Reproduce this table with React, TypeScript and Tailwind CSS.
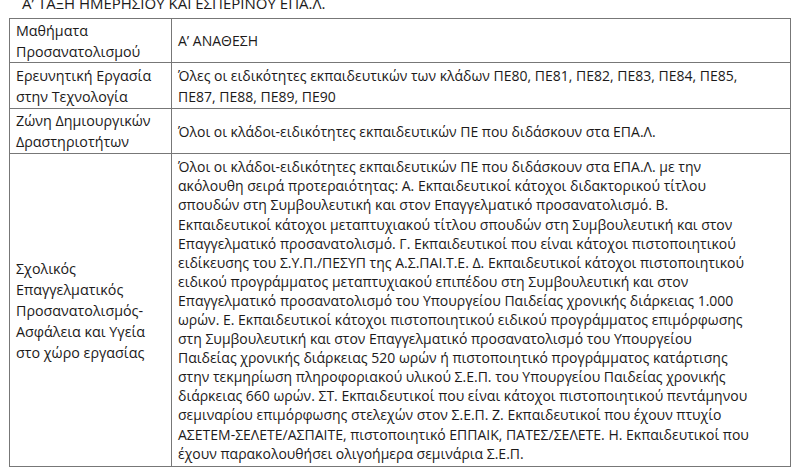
const rows: { label: string[]; text: string[] }[] = [
  {
    label: ["Μαθήματα", "Προσανατολισμού"],
    text: ["Α’ ΑΝΑΘΕΣΗ"],
  },
  {
    label: ["Ερευνητική Εργασία", "στην Τεχνολογία"],
    text: [
      "Όλες οι ειδικότητες εκπαιδευτικών των κλάδων ΠΕ80, ΠΕ81, ΠΕ82, ΠΕ83, ΠΕ84, ΠΕ85,",
      "ΠΕ87, ΠΕ88, ΠΕ89, ΠΕ90",
    ],
  },
  {
    label: ["Ζώνη Δημιουργικών", "Δραστηριοτήτων"],
    text: ["Όλοι οι κλάδοι-ειδικότητες εκπαιδευτικών ΠΕ που διδάσκουν στα ΕΠΑ.Λ."],
  },
  {
    label: [
      "Σχολικός",
      "Επαγγελματικός",
      "Προσανατολισμός-",
      "Ασφάλεια και Υγεία",
      "στο χώρο εργασίας",
    ],
    text: [
      "Όλοι οι κλάδοι-ειδικότητες εκπαιδευτικών ΠΕ που διδάσκουν στα ΕΠΑ.Λ. με την",
      "ακόλουθη σειρά προτεραιότητας: Α. Εκπαιδευτικοί κάτοχοι διδακτορικού τίτλου",
      "σπουδών στη Συμβουλευτική και στον Επαγγελματικό προσανατολισμό. Β.",
      "Εκπαιδευτικοί κάτοχοι μεταπτυχιακού τίτλου σπουδών στη Συμβουλευτική και στον",
      "Επαγγελματικό προσανατολισμό. Γ. Εκπαιδευτικοί που είναι κάτοχοι πιστοποιητικού",
      "ειδίκευσης του Σ.Υ.Π./ΠΕΣΥΠ της Α.Σ.ΠΑΙ.Τ.Ε. Δ. Εκπαιδευτικοί κάτοχοι πιστοποιητικού",
      "ειδικού προγράμματος μεταπτυχιακού επιπέδου στη Συμβουλευτική και στον",
      "Επαγγελματικό προσανατολισμό του Υπουργείου Παιδείας χρονικής διάρκειας 1.000",
      "ωρών. Ε. Εκπαιδευτικοί κάτοχοι πιστοποιητικού ειδικού προγράμματος επιμόρφωσης",
      "στη Συμβουλευτική και στον Επαγγελματικό προσανατολισμό του Υπουργείου",
      "Παιδείας χρονικής διάρκειας 520 ωρών ή πιστοποιητικό προγράμματος κατάρτισης",
      "στην τεκμηρίωση πληροφοριακού υλικού Σ.Ε.Π. του Υπουργείου Παιδείας χρονικής",
      "διάρκειας 660 ωρών. ΣΤ. Εκπαιδευτικοί που είναι κάτοχοι πιστοποιητικού πεντάμηνου",
      "σεμιναρίου επιμόρφωσης στελεχών στον Σ.Ε.Π. Ζ. Εκπαιδευτικοί που έχουν πτυχίο",
      "ΑΣΕΤΕΜ-ΣΕΛΕΤΕ/ΑΣΠΑΙΤΕ, πιστοποιητικό ΕΠΠΑΙΚ, ΠΑΤΕΣ/ΣΕΛΕΤΕ. Η. Εκπαιδευτικοί που",
      "έχουν παρακολουθήσει ολιγοήμερα σεμινάρια Σ.Ε.Π.",
    ],
  },
];

const heights = ["h-[44px]", "h-[46px]", "h-[45px]", "h-[313px]"];

export default function App() {
  return (
    <div className="w-[799px] h-[473px] overflow-hidden bg-white text-[#1c1a1a] font-['Open_Sans','Liberation_Sans',sans-serif] text-[14px]">
      {/* title, cut off at the top */}
      <div className="pl-[22px] -mt-[4px] h-[22px] leading-[15px] text-[15px] whitespace-nowrap">
        Α’ ΤΑΞΗ ΗΜΕΡΗΣΙΟΥ ΚΑΙ ΕΣΠΕΡΙΝΟΥ ΕΠΑ.Λ.
      </div>

      <table className="ml-[9px] border-collapse table-fixed w-[781px]">
        <colgroup>
          <col className="w-[162px]" />
          <col className="w-[619px]" />
        </colgroup>
        <tbody>
          {rows.map((row, i) => (
            <tr key={i} className={heights[i]}>
              <td className="border border-[#777] px-[6px] align-middle leading-[21px] text-[14.3px]">
                {row.label.map((l) => (
                  <div key={l} className="whitespace-nowrap">
                    {l}
                  </div>
                ))}
              </td>
              <td
                className={`border border-[#777] pl-[6px] align-middle ${
                  i === 3 ? "leading-[19.1px]" : "leading-[21px]"
                }`}
              >
                {row.text.map((t) => (
                  <div key={t} className="whitespace-nowrap">
                    {t}
                  </div>
                ))}
              </td>
            </tr>
          ))}
        </tbody>
      </table>
    </div>
  );
}
